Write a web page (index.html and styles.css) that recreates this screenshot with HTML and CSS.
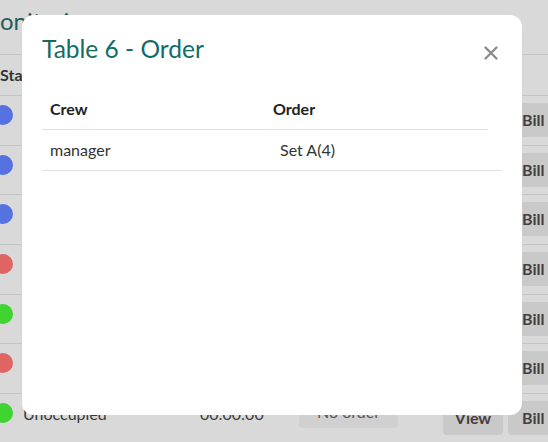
FILE: index.html
```html
<!DOCTYPE html>
<html lang="en">
<head>
<meta charset="utf-8">
<title>Monitoring</title>
<link rel="stylesheet" href="styles.css">
</head>
<body>
<div class="page">
  <h1 class="page-title">Monitoring</h1>
  <div class="tables">
    <div class="row head">
      <div class="cell status-head">Status</div>
      <div class="cell">Time</div>
      <div class="cell">Order</div>
      <div class="cell">Actions</div>
    </div>
    <div class="row">
      <div class="cell status"><span class="dot blue"></span><span>Ordering</span></div>
      <div class="cell time">00:14:22</div>
      <div class="cell"><span class="btn-order">Set A(2)</span></div>
      <div class="cell actions"><span class="btn btn-view">View</span><span class="btn">Bill</span></div>
    </div>
    <div class="row">
      <div class="cell status"><span class="dot blue"></span><span>Ordering</span></div>
      <div class="cell time">00:09:05</div>
      <div class="cell"><span class="btn-order">Set B(3)</span></div>
      <div class="cell actions"><span class="btn btn-view">View</span><span class="btn">Bill</span></div>
    </div>
    <div class="row">
      <div class="cell status"><span class="dot blue"></span><span>Ordering</span></div>
      <div class="cell time">00:05:41</div>
      <div class="cell"><span class="btn-order">Set A(1)</span></div>
      <div class="cell actions"><span class="btn btn-view">View</span><span class="btn">Bill</span></div>
    </div>
    <div class="row">
      <div class="cell status"><span class="dot red"></span><span>Occupied</span></div>
      <div class="cell time">00:31:10</div>
      <div class="cell"><span class="btn-order">Set C(2)</span></div>
      <div class="cell actions"><span class="btn btn-view">View</span><span class="btn">Bill</span></div>
    </div>
    <div class="row">
      <div class="cell status"><span class="dot green"></span><span>Unoccupied</span></div>
      <div class="cell time">00:00:00</div>
      <div class="cell"><span class="btn-order">No order</span></div>
      <div class="cell actions"><span class="btn btn-view">View</span><span class="btn">Bill</span></div>
    </div>
    <div class="row">
      <div class="cell status"><span class="dot red"></span><span>Occupied</span></div>
      <div class="cell time">00:22:48</div>
      <div class="cell"><span class="btn-order">Set A(4)</span></div>
      <div class="cell actions"><span class="btn btn-view">View</span><span class="btn">Bill</span></div>
    </div>
    <div class="row">
      <div class="cell status"><span class="dot green"></span><span>Unoccupied</span></div>
      <div class="cell time">00:00:00</div>
      <div class="cell"><span class="btn-order">No order</span></div>
      <div class="cell actions"><span class="btn btn-view">View</span><span class="btn">Bill</span></div>
    </div>
  </div>
</div>

<div class="overlay">
  <div class="modal">
    <div class="modal-head">
      <h2 class="modal-title">Table 6 - Order</h2>
      <span class="close" aria-label="Close">
        <svg width="14" height="14" viewBox="0 0 14 14"><path d="M1.5 1.5 L12.5 12.5 M12.5 1.5 L1.5 12.5" stroke="#8c8c8c" stroke-width="2.4" stroke-linecap="round" fill="none"/></svg>
      </span>
    </div>
    <div class="otable ohead">
      <div class="ocell">Crew</div>
      <div class="ocell">Order</div>
    </div>
    <div class="otable obody">
      <div class="ocell">manager</div>
      <div class="ocell">Set A(4)</div>
    </div>
  </div>
</div>
</body>
</html>
```
FILE: styles.css
```css
* { box-sizing: border-box; }
html, body {
  margin: 0;
  padding: 0;
  width: 548px;
  height: 442px;
  overflow: hidden;
  background: #d9d9d9;
  font-family: "Lato", "Noto Sans", sans-serif;
  font-size: 16px;
  line-height: 24px;
  color: #3a3a3a;
}

/* dimmed page behind the dialog (scrolled a little to the right) */
.page {
  margin-left: -22px;
  width: 620px;
}
.page-title {
  margin: 0;
  padding-top: 6px;
  height: 55px;
  font-size: 24px;
  line-height: 29px;
  font-weight: 400;
  color: #1f5f5b;
  border-bottom: 1px solid #c3c3c3;
}
.row {
  display: grid;
  grid-template-columns: 207px 99px 144px 1fr;
  padding-left: 15px;
  height: 49.7px;
  border-bottom: 1px solid #c3c3c3;
}
.row.head {
  height: 41px;
  align-items: center;
  font-weight: 700;
  color: #333;
}
.status-head { padding-left: 7px; }
.cell { display: flex; align-items: flex-start; }
.status { gap: 10px; padding-top: 8px; }
.dot {
  width: 20px;
  height: 20px;
  border-radius: 50%;
  margin-top: 1px;
  flex: none;
}
.dot.blue { background: #5671e0; }
.dot.red { background: #df6464; }
.dot.green { background: #3fd42f; }
.time { padding-top: 8px; }
.btn-order {
  margin-top: 2px;
  width: 99px;
  padding: 4px 0;
  text-align: center;
  background: #d0d0d0;
  border-radius: 4px;
  color: #555;
}
.actions { gap: 5px; }
.btn {
  margin-top: 7px;
  padding: 5px 14px;
  text-align: center;
  background: #c9c9c9;
  border-radius: 4px;
  font-weight: 700;
  color: #463e3e;
}
.btn-view {
  width: 60px;
  padding-left: 0;
  padding-right: 0;
}

/* dialog */
.overlay {
  position: fixed;
  inset: 0;
  padding: 15px 0 0 22px;
}
.modal {
  width: 500px;
  height: 400px;
  background: #fff;
  border-radius: 12px;
  padding: 19px 20px 20px 20px;
}
.modal-head {
  display: flex;
  justify-content: space-between;
  align-items: flex-start;
  height: 29px;
  margin-bottom: 26px;
}
.modal-title {
  margin: 0;
  font-size: 24.5px;
  line-height: 29px;
  font-weight: 400;
  color: #136b66;
}
.close {
  display: flex;
  margin: 12px 4px 0 0;
}
.otable {
  display: grid;
  grid-template-columns: 1fr 1fr;
  border-bottom: 1px solid #e0e0e0;
}
.ohead { width: 446px; font-weight: 700; color: #222; }
.obody { width: 460px; color: #333; }
.ocell { padding: 8px; }
```
